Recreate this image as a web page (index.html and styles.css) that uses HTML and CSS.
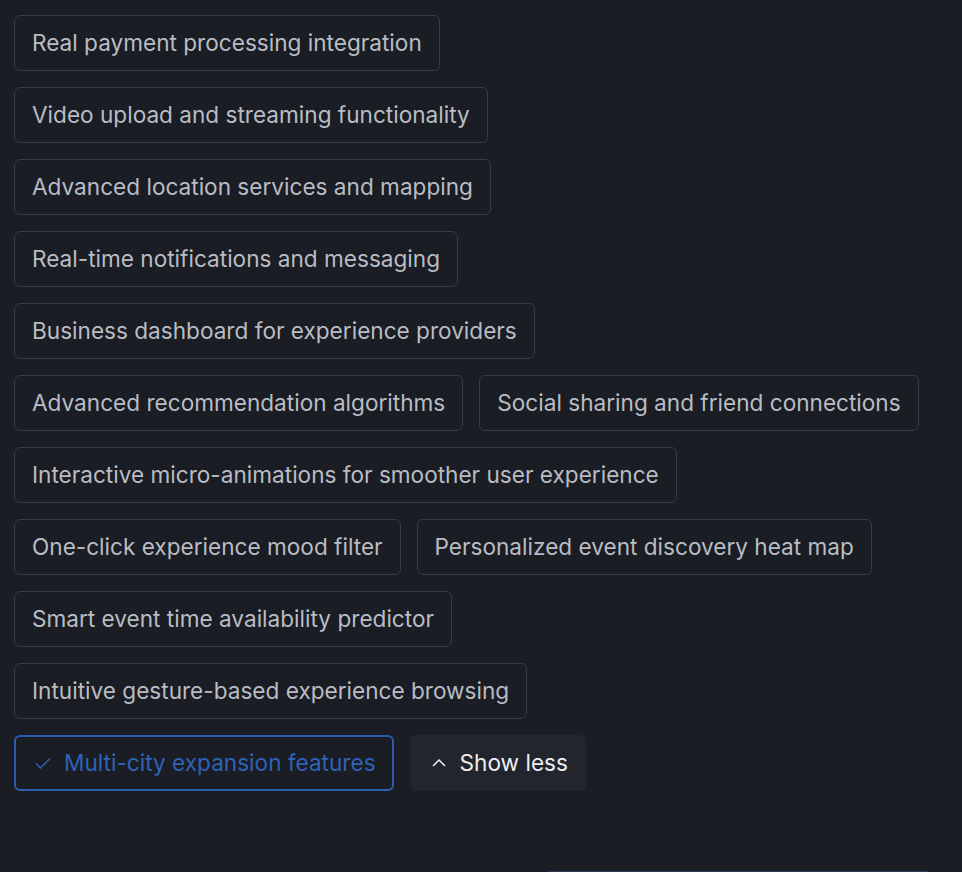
FILE: index.html
```html
<!DOCTYPE html>
<html>
<head>
<meta charset="utf-8">
<link rel="stylesheet" href="styles.css">
</head>
<body>
<div class="page">
  <div class="chips">
    <button class="chip">Real payment processing integration</button>
    <button class="chip">Video upload and streaming functionality</button>
    <button class="chip">Advanced location services and mapping</button>
    <button class="chip">Real-time notifications and messaging</button>
    <button class="chip">Business dashboard for experience providers</button>
    <button class="chip">Advanced recommendation algorithms</button>
    <button class="chip">Social sharing and friend connections</button>
    <button class="chip">Interactive micro-animations for smoother user experience</button>
    <button class="chip">One-click experience mood filter</button>
    <button class="chip">Personalized event discovery heat map</button>
    <button class="chip">Smart event time availability predictor</button>
    <button class="chip">Intuitive gesture-based experience browsing</button>
    <button class="chip chip-selected"><svg class="icon" width="18" height="18" viewBox="0 0 18 18"><path d="M2 9.5 L6.5 14 L16 4.5" fill="none" stroke="currentColor" stroke-width="1.4"/></svg>Multi-city expansion features</button>
    <button class="toggle"><svg class="icon" width="16" height="16" viewBox="0 0 16 16"><path d="M2 11 L8 5 L14 11" fill="none" stroke="currentColor" stroke-width="1.5"/></svg>Show less</button>
  </div>
  <div class="next-row">
    <div class="next-card"></div>
  </div>
</div>
</body>
</html>
```
FILE: styles.css
```css
html, body {
  margin: 0;
  padding: 0;
  background: #1a1d24;
}
body {
  font-family: "Inter", "Noto Sans", sans-serif;
  width: 962px;
  height: 872px;
  overflow: hidden;
}
.page {
  padding: 15px 14px 0 14px;
}
.chips {
  display: flex;
  flex-wrap: wrap;
  gap: 16px 16px;
  width: 906px;
}
.chip {
  display: inline-flex;
  align-items: center;
  height: 56px;
  box-sizing: border-box;
  padding: 0 17px;
  border: 1px solid #393c44;
  border-radius: 6px;
  background: transparent;
  color: #b9bcc3;
  font-family: inherit;
  font-size: 22.6px;
  line-height: 1;
  cursor: pointer;
}
.chip-selected {
  border: 2px solid #2a5cb0;
  color: #2f62b8;
  padding: 0 16px 0 18px;
  gap: 12px;
}
.toggle {
  display: inline-flex;
  align-items: center;
  gap: 13px;
  height: 56px;
  box-sizing: border-box;
  padding: 0 18px 0 21px;
  border: none;
  border-radius: 6px;
  background: #22252d;
  color: #eceef2;
  font-family: inherit;
  font-size: 22.6px;
  line-height: 1;
}
.icon {
  flex: none;
}
.next-row {
  display: flex;
  justify-content: flex-end;
  padding: 80px 16px 0 0;
}
.next-card {
  width: 386px;
  height: 40px;
  border-top: 1px solid #2b3c58;
  border-radius: 6px 6px 0 0;
}
```
